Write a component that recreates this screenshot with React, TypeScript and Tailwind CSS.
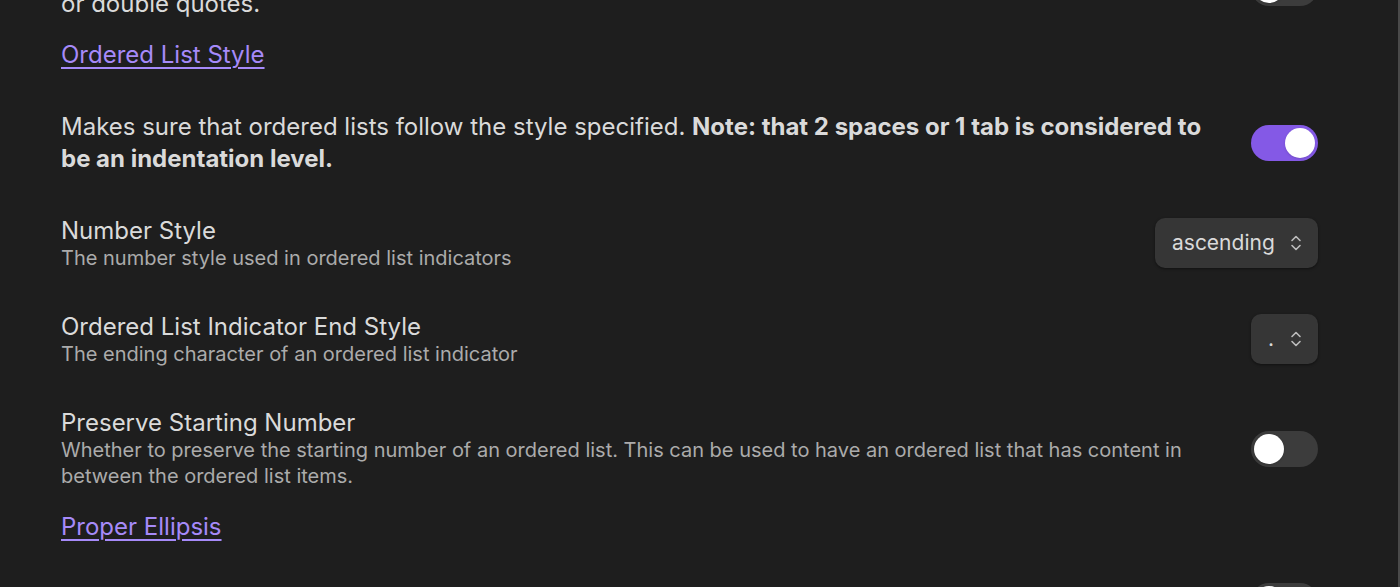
import React, { useState } from 'react';

const font = { fontFamily: 'Inter, "Noto Sans", sans-serif' };

function Toggle({ on, onChange }: { on: boolean; onChange: () => void }) {
  return (
    <button
      onClick={onChange}
      className={`relative shrink-0 w-[67px] h-[36px] rounded-full transition-colors ${
        on ? 'bg-[#8459e6]' : 'bg-[#3c3c3c]'
      }`}
    >
      <span
        className={`absolute top-[3px] w-[30px] h-[30px] rounded-full bg-white shadow transition-all ${
          on ? 'left-[34px]' : 'left-[3px]'
        }`}
      />
    </button>
  );
}

function Chevrons() {
  return (
    <svg width="12" height="18" viewBox="0 0 12 18" fill="none" stroke="#bdbdbd" strokeWidth="1.6" strokeLinecap="round" strokeLinejoin="round">
      <path d="M2 6.5 6 2.5 10 6.5" />
      <path d="M2 11.5 6 15.5 10 11.5" />
    </svg>
  );
}

function Select({ value, width }: { value: string; width: string }) {
  return (
    <button
      className={`shrink-0 h-[50px] -mt-[3px] ${width} rounded-[10px] bg-[#363636] shadow-[0_1px_3px_rgba(0,0,0,0.45)] flex items-center justify-between pl-[17px] pr-[16px] text-[21px] text-[#dadada]`}
    >
      <span>{value}</span>
      <Chevrons />
    </button>
  );
}

function Heading({ children }: { children: React.ReactNode }) {
  return (
    <div className="leading-[34px] mb-[16px]">
      <a href="#" className="text-[24px] text-[#a68af9] underline underline-offset-[4px] decoration-[1.5px]">
        {children}
      </a>
    </div>
  );
}

function Item({
  title,
  desc,
  control,
}: {
  title?: string;
  desc: React.ReactNode;
  control: React.ReactNode;
}) {
  return (
    <div className="flex items-center justify-between py-[21px] gap-5">
      <div className="flex-1 min-w-0">
        {title ? (
          <>
            <div className="text-[24px] leading-[28px] text-[#dadada]">{title}</div>
            <div className="text-[20px] leading-[26px] text-[#ababab]">{desc}</div>
          </>
        ) : (
          <div className="text-[24px] leading-[32px] text-[#dadada]">{desc}</div>
        )}
      </div>
      {control}
    </div>
  );
}

export default function App() {
  const [toggles, setToggles] = useState({ quotes: false, ordered: true, preserve: false, ellipsis: false });
  const flip = (k: keyof typeof toggles) => setToggles((t) => ({ ...t, [k]: !t[k] }));

  return (
    <div className="h-[587px] overflow-hidden bg-[#1e1e1e] border-r-2 border-[#4a4a4a]" style={font}>
      <div className="pl-[61px] pr-[80px] -mt-[65px]">
        <div className="flex items-center justify-between pt-[21px] pb-[18px] gap-5">
          <div className="flex-1 text-[24px] leading-[32px] text-[#dadada]">
            <div className="h-8" />
            or double quotes.
          </div>
          <Toggle on={toggles.quotes} onChange={() => flip('quotes')} />
        </div>

        <Heading>Ordered List Style</Heading>

        <Item
          desc={
            <>
              Makes sure that ordered lists follow the style specified.{' '}
              <b className="font-bold">Note: that 2 spaces or 1 tab is considered to be an indentation level.</b>
            </>
          }
          control={<Toggle on={toggles.ordered} onChange={() => flip('ordered')} />}
        />
        <Item
          title="Number Style"
          desc="The number style used in ordered list indicators"
          control={<Select value="ascending" width="w-[163px]" />}
        />
        <Item
          title="Ordered List Indicator End Style"
          desc="The ending character of an ordered list indicator"
          control={<Select value="." width="w-[67px]" />}
        />
        <Item
          title="Preserve Starting Number"
          desc="Whether to preserve the starting number of an ordered list. This can be used to have an ordered list that has content in between the ordered list items."
          control={<Toggle on={toggles.preserve} onChange={() => flip('preserve')} />}
        />

        <Heading>Proper Ellipsis</Heading>

        <Item
          desc="Replaces three consecutive full stops with an ellipsis."
          control={<Toggle on={toggles.ellipsis} onChange={() => flip('ellipsis')} />}
        />
      </div>
    </div>
  );
}
